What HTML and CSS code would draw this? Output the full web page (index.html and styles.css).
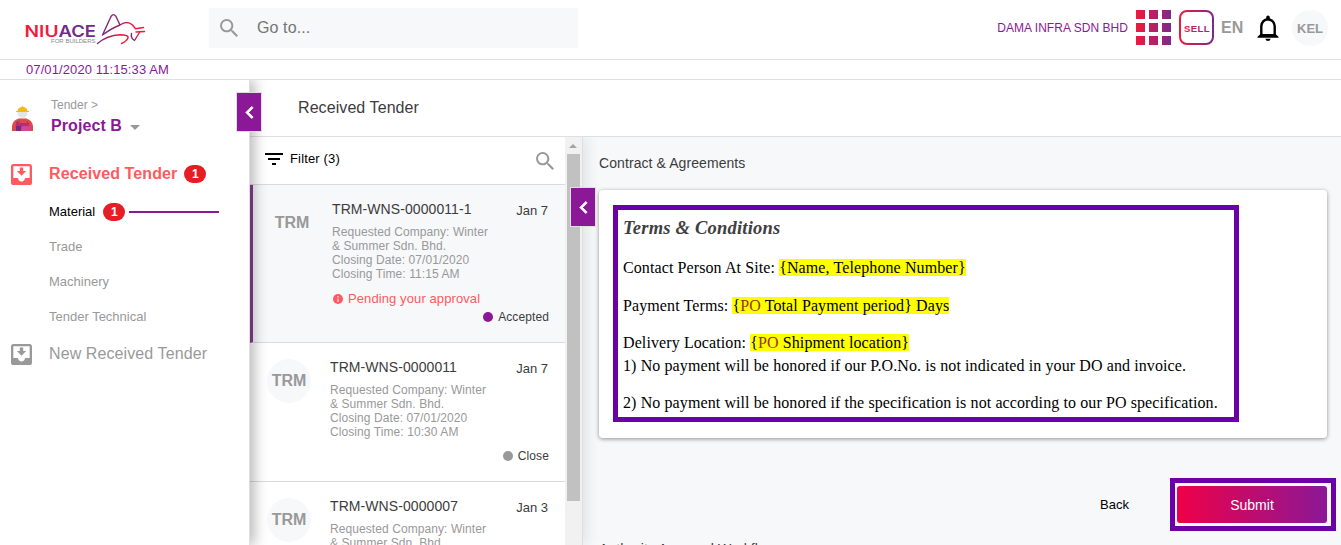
FILE: index.html
```html
<!DOCTYPE html>
<html lang="en">
<head>
<meta charset="utf-8">
<title>Received Tender</title>
<link rel="stylesheet" href="styles.css">
</head>
<body>
<svg class="defs" width="0" height="0" aria-hidden="true">
  <defs>
    <linearGradient id="brand" x1="0" x2="1" y1="0" y2="0"><stop offset="0" stop-color="#f5163c"/><stop offset="1" stop-color="#7b2a8b"/></linearGradient>
    <linearGradient id="brandGrid" gradientUnits="userSpaceOnUse" x1="0" x2="35" y1="0" y2="0"><stop offset="0" stop-color="#f5163c"/><stop offset="1" stop-color="#7b2a8b"/></linearGradient>
    <linearGradient id="tail" gradientUnits="userSpaceOnUse" x1="97" x2="129" y1="0" y2="0"><stop offset="0" stop-color="#6f2b8a"/><stop offset=".8" stop-color="#f5163c"/></linearGradient>
    <linearGradient id="back" gradientUnits="userSpaceOnUse" x1="101" x2="140" y1="0" y2="0"><stop offset="0" stop-color="#6f2b8a"/><stop offset=".5" stop-color="#a02468"/><stop offset=".8" stop-color="#f5163c"/></linearGradient>
    <linearGradient id="face" gradientUnits="userSpaceOnUse" x1="131" x2="140" y1="0" y2="0"><stop offset="0" stop-color="#6f2b8a"/><stop offset="1" stop-color="#f5163c"/></linearGradient>
    <symbol id="search" viewBox="3 3 17.5 17.5"><path d="M15.5 14h-.79l-.28-.27A6.47 6.47 0 0 0 16 9.500 6.500 6.500 0 1 0 9.500 16c1.610 0 3.090-.59 4.230-1.570l.27.28v.79l5 4.990L20.490 19l-4.990-5zm-6 0C7.010 14 5 11.990 5 9.500S7.010 5 9.500 5 14 7.010 14 9.500 11.990 14 9.500 14z"/></symbol>
    <symbol id="inbox" viewBox="3 3 18 18"><path d="M16 9h-2.550V6h-2.900v3H8l4 4zm3-6H4.990C3.880 3 3 3.900 3 5v14c0 1.100.88 2 1.990 2H19c1.100 0 2-.9 2-2V5c0-1.100-.9-2-2-2zm0 12h-4c0 1.660-1.350 3-3 3s-3-1.340-3-3H4.990V5H19v10z"/></symbol>
    <symbol id="chevron" viewBox="7.500 5.500 8.500 13"><path d="M15.410 7.410 14 6l-6 6 6 6 1.410-1.410L10.830 12z" stroke="#fff" stroke-width=".8"/></symbol>
  </defs>
</svg>

<header class="topbar">
  <svg class="logo" width="128" height="40" viewBox="22 8 128 40">
    <text class="logo-name" x="24.500" y="36.800" textLength="34" lengthAdjust="spacingAndGlyphs" fill="#ee1c3f">NIU</text>
    <text class="logo-name" x="58.500" y="36.800" textLength="37.500" lengthAdjust="spacingAndGlyphs" fill="#742a88">ACE</text>
    <text class="logo-tag" x="51" y="43" textLength="44.500" lengthAdjust="spacingAndGlyphs">FOR BUILDERS</text>
    <g fill="none" stroke-width="1.400" stroke-linejoin="round" stroke-linecap="round">
      <path stroke="url(#back)" d="M102.500 35 111 16.500Q113.500 12.800 116 16.500L120 25Q112 28 102.500 35M120 25Q127 20 132.500 25L135.500 28.800 143.500 27.500M136 32 144.500 31.500"/>
      <path stroke="url(#face)" d="M139.500 32.500 137 36.500 134.500 40.500Q130.500 38 131.500 33.500"/>
      <path stroke="url(#tail)" d="M97.500 43.500Q107 35.500 120 34.800 129 35 128 38 127 41 121.500 43.500"/>
    </g>
  </svg>
  <div class="search"><svg width="18" height="18" fill="#999"><use href="#search"/></svg><span>Go to...</span></div>
  <div class="tools">
    <span class="company">DAMA INFRA SDN BHD</span>
    <svg class="grid" width="35" height="35" fill="url(#brandGrid)"><path d="M0 0h9v9H0zM13 0h9v9h-9zM26 0h9v9h-9zM0 13h9v9H0zM13 13h9v9h-9zM26 13h9v9h-9zM0 26h9v9H0zM13 26h9v9h-9zM26 26h9v9h-9z"/></svg>
    <svg class="sell" width="35" height="35"><rect x="1" y="1" width="33" height="33" rx="7" fill="#fff" stroke="url(#brand)" stroke-width="2"/><text x="5" y="22" textLength="25.500" lengthAdjust="spacing" fill="url(#brandGrid)">SELL</text></svg>
    <span class="lang">EN</span>
    <svg class="bell" width="22" height="26" viewBox="0 0 22 26"><path d="M4.300 20.500V11.200Q4.800 5 11 4.200 17.200 5 17.700 11.200V20.500" fill="none" stroke="#000" stroke-width="2.400"/><path d="M9.200 4V2.200a1.800 1.800 0 0 1 3.600 0V4zM3.500 19h15l3 2.700v1H.5v-1zM8.300 23.800h5.400q-.6 2.200-2.700 2.200t-2.700-2.200z"/></svg>
    <span class="avatar">KEL</span>
  </div>
</header>
<div class="clock">07/01/2020 11:15:33 AM</div>

<div class="shell">
  <aside class="sidebar">
    <div class="project">
      <svg width="22" height="27" viewBox="0 0 22 27">
        <circle cx="10.500" cy="7" r="5" fill="#e5e5e8"/>
        <path d="M5.500 5Q6 1.500 9.500 1L10.500 0l1 1Q15 1.500 15.500 5H17v1H4V5z" fill="#f5b916"/>
        <path d="M0 25V20Q1 13 8 12.500h5Q20 13 21 20v5z" fill="#dc4949"/>
        <path d="M4 25v-8l4-4v12z" fill="#762b8b"/><path d="M4 17h13v4H4zM13 13l4 4v4h-4z" fill="#b62e6b"/><path d="M10 20h8v5h-8z" fill="#d34499"/><path d="M4 20h5v5H4z" fill="#742a8b"/>
        <path d="M7 12v5M14 12v5" stroke="#e76755"/>
      </svg>
      <div><div class="crumb">Tender &gt;</div><div class="project-name">Project B <i></i></div></div>
    </div>
    <div class="nav-head active"><svg width="21" height="21"><use href="#inbox"/></svg><span>Received Tender</span><b class="badge">1</b></div>
    <div class="nav-item current"><span>Material</span><b class="badge">1</b><i></i></div>
    <div class="nav-item">Trade</div>
    <div class="nav-item">Machinery</div>
    <div class="nav-item">Tender Technical</div>
    <div class="nav-head"><svg width="21" height="21"><use href="#inbox"/></svg><span>New Received Tender</span></div>
    <button class="toggle toggle-nav"><svg width="9" height="13"><use href="#chevron"/></svg></button>
  </aside>

  <main class="main">
    <h1 class="title">Received Tender</h1>
    <div class="columns">
      <section class="list-pane">
        <div class="list">
          <div class="filter">
            <svg width="18" height="12"><path d="M0 0h18v2H0zM3 5h12v2H3zM7 10h4v2H7z"/></svg>
            <span>Filter (3)</span>
            <svg class="find" width="18" height="18" fill="#999"><use href="#search"/></svg>
          </div>
          <article class="tender selected">
            <span class="mono">TRM</span>
            <div class="info"><div class="row"><h2>TRM-WNS-0000011-1</h2><time>Jan 7</time></div>
              <p>Requested Company: Winter<br>&amp; Summer Sdn. Bhd.<br>Closing Date: 07/01/2020<br>Closing Time: 11:15 AM</p>
              <div class="pending"><svg width="10" height="10" viewBox="0 0 10 10"><circle cx="5" cy="5" r="5" fill="#ff5a5f"/><path d="M4.300 2h1.400v1.500H4.300zM4.300 4.500h1.400V8H4.300z" fill="#fff" opacity=".75"/></svg>Pending your approval</div>
              <div class="status"><i></i>Accepted</div></div>
          </article>
          <article class="tender">
            <span class="mono">TRM</span>
            <div class="info"><div class="row"><h2>TRM-WNS-0000011</h2><time>Jan 7</time></div>
              <p>Requested Company: Winter<br>&amp; Summer Sdn. Bhd.<br>Closing Date: 07/01/2020<br>Closing Time: 10:30 AM</p>
              <div class="status closed"><i></i>Close</div></div>
          </article>
          <article class="tender">
            <span class="mono">TRM</span>
            <div class="info"><div class="row"><h2>TRM-WNS-0000007</h2><time>Jan 3</time></div>
              <p>Requested Company: Winter<br>&amp; Summer Sdn. Bhd.</p></div>
          </article>
        </div>
        <div class="scrollbar"><i class="up"></i><i class="thumb"></i></div>
        <button class="toggle toggle-list"><svg width="9" height="13"><use href="#chevron"/></svg></button>
      </section>

      <section class="content">
        <h3>Contract &amp; Agreements</h3>
        <div class="card">
          <div class="terms">
            <h4>Terms &amp; Conditions</h4>
            <p>Contact Person At Site: <mark>{Name, Telephone Number}</mark></p>
            <p>Payment Terms: <mark>{<em>PO</em> Total Payment period} Days</mark></p>
            <p>Delivery Location: <mark>{<em>PO</em> Shipment location}</mark><br>1) No payment will be honored if our P.O.No. is not indicated in your DO and invoice.</p>
            <p>2) No payment will be honored if the specification is not according to our PO specification.</p>
          </div>
        </div>
        <div class="actions"><button class="back">Back</button><div class="submit-frame"><button class="submit">Submit</button></div></div>
        <h3 class="next">Authority Approval Workflow</h3>
      </section>
    </div>
  </main>
</div>
</body>
</html>
```
FILE: styles.css
```css
* { box-sizing: border-box; }
body { margin: 0; height: 545px; overflow: hidden; background: #fff; color: #3c3c3c; font-family: "Liberation Sans", Arial, sans-serif; }
h1, h2, h3, h4, p { margin: 0; font-weight: normal; }
button { border: 0; padding: 0; background: none; font-family: inherit; }
svg { display: block; flex: none; }
.defs { position: absolute; }

/* Top bar */
.topbar { display: flex; height: 60px; border-bottom: 1px solid #dfdfe2; padding: 8px 13px 0 22px; }
.logo-name { font: 600 15.500px Inter, sans-serif; }
.logo-tag { font: 5.800px "Liberation Sans", sans-serif; fill: #888; }
.search { display: flex; align-items: center; gap: 19px; width: 369px; height: 40px; margin-left: 59px; padding-left: 11px; background: #f6f8fa; color: #757575; font-size: 16px; letter-spacing: .1px; }
.tools { display: flex; align-items: center; height: 40px; margin-left: auto; }
.company { color: #8b1896; font-size: 12px; letter-spacing: .04px; }
.grid { margin: -1px 8px 0 8px; }
.sell { margin-top: -1px; }
.sell text { font: bold 9.500px "Liberation Sans", sans-serif; }
.lang { width: 23px; margin: 0 13px 0 7px; color: #999; font-size: 16px; font-weight: bold; }
.avatar { display: flex; align-items: center; justify-content: center; width: 36px; height: 36px; margin-left: 13px; border-radius: 50%; background: #f6f8fa; color: #999; font-size: 13px; font-weight: bold; }
.clock { height: 20px; padding-left: 26px; border-bottom: 1px solid #dfdfe2; color: #8b1896; font-size: 13px; line-height: 19px; letter-spacing: .1px; }

.shell { display: flex; height: 465px; }

/* Sidebar */
.sidebar { position: relative; z-index: 2; flex: none; width: 250px; height: 465px; border-right: 1px solid #dfdfe2; background: #fff; box-shadow: 5px 0 12px rgba(0, 0, 0, .26); clip-path: inset(0 -20px 0 0); color: #999; }
.project { display: flex; gap: 18px; height: 76px; padding: 16px 0 0 12px; }
.project svg { margin-top: 10px; margin-right: -1px; }
.crumb { height: 18px; font-size: 12px; line-height: 18px; }
.project-name { display: flex; align-items: center; gap: 8px; color: #8b1896; font-size: 16px; font-weight: bold; line-height: 23px; letter-spacing: .08px; }
.project-name i { border: 5px solid transparent; border-top-color: #999; border-bottom: 0; margin-top: 3px; }
.nav-head { display: flex; align-items: center; height: 36px; padding-left: 11px; font-size: 16px; letter-spacing: .1px; }
.nav-head svg { margin-right: 17px; fill: #999; }
.active { color: #ff5a5f; font-weight: bold; letter-spacing: .1px; }
.active svg { fill: #ff5a5f; }
.badge { width: 22px; height: 18px; margin-left: 8px; border-radius: 9px; background: #e61d25; color: #fff; font-size: 12px; font-weight: bold; line-height: 18px; text-align: center; }
.active .badge { margin-left: 7px; }
.nav-item { display: flex; align-items: center; height: 35px; padding-left: 49px; font-size: 13px; }
.current { height: 39px; color: #000; }
.current + .nav-item { margin-top: -2px; }
.current i { width: 90px; height: 2px; margin-left: 4px; background: #8b1896; }
.nav-item + .nav-head { margin-top: 2px; }
.nav-item .badge { flex: none; }
.toggle { position: absolute; z-index: 3; display: flex; align-items: center; justify-content: center; width: 26px; height: 40px; border: 1px solid #dfdfe2; background: #8b1896; }
.toggle svg { fill: #fff; }
.toggle-nav { top: 12px; left: 236px; }
.toggle-list { top: 50px; left: 320px; }

/* Main area */
.main { flex: 1; min-width: 0; }
.title { height: 57px; padding-left: 48px; border-bottom: 1px solid #dfdfe2; font-size: 16px; line-height: 55px; letter-spacing: .08px; }
.columns { display: flex; height: 408px; }
.list-pane { position: relative; z-index: 1; display: flex; flex: none; width: 333px; border-right: 1px solid #dfdfe2; box-shadow: 5px 0 12px rgba(0, 0, 0, .08); clip-path: inset(0 -20px 0 0); }
.list { width: 315px; overflow: hidden; }
.filter { display: flex; align-items: center; gap: 7px; height: 48px; padding: 0 11px 4px 15px; border-bottom: 1px solid #d9dbe0; color: #000; font-size: 13px; letter-spacing: .15px; }
.find { margin: 5px 0 0 auto; }
.tender { display: flex; height: 139px; padding: 16px 17px 0 17px; border-bottom: 1px solid #d9dbe0; background: #fff; }
.selected { height: 158px; padding-left: 17px; border-left: 3px solid #8e3d93; background: #f6f8fa; }
.mono { display: flex; align-items: center; justify-content: center; flex: none; width: 44px; height: 44px; border-radius: 50%; background: #f6f8fa; color: #999; font-size: 16px; font-weight: bold; }
.info { flex: 1; margin-left: 19px; }
.selected .info { margin-left: 18px; }
.row { display: flex; justify-content: space-between; height: 24px; }
h2 { font-size: 14px; line-height: 17px; letter-spacing: .08px; }
time { font-size: 13px; line-height: 20px; }
.tender p { color: #999; font-size: 12px; line-height: 14px; letter-spacing: .08px; white-space: nowrap; }
.pending { display: flex; align-items: center; gap: 5px; height: 15px; margin: 10px 0 0 1px; color: #ff5a5f; font-size: 13px; letter-spacing: .1px; }
.status { display: flex; align-items: center; justify-content: flex-end; gap: 5px; height: 14px; margin: 4px -1px 0 0; font-size: 12px; letter-spacing: .1px; }
.status i { width: 10px; height: 10px; border-radius: 50%; background: #8b1896; }
.closed { margin-top: 10px; }
.closed i { background: #999; }
.scrollbar { width: 17px; background: #f1f1f1; }
.scrollbar i { display: block; }
.up { width: 0; margin: 7px 0 6px 4px; border: 4px solid transparent; border-bottom-color: #a3a3a3; border-top: 0; }
.thumb { width: 13px; height: 347px; margin-left: 2px; background: #c1c1c1; }

/* Agreement */
.content { flex: 1; min-width: 0; padding: 18px 14px 0 16px; background: #f6f8fa; }
h3 { height: 35px; font-size: 14px; line-height: 17px; letter-spacing: .08px; }
.card { height: 248px; padding: 15px 14px; border-radius: 4px; background: #fff; box-shadow: 0 1px 4px rgba(0, 0, 0, .42); }
.terms { width: 626px; height: 217px; padding: 7px 5px; border: 5px solid #6a00a5; color: #000; font: 16px/23px "Liberation Serif", serif; letter-spacing: .1px; white-space: nowrap; }
h4 { margin-bottom: 16px; color: #404040; font-size: 18.500px; font-style: italic; font-weight: bold; line-height: 23px; letter-spacing: .22px; }
.terms p { margin-bottom: 14px; }
.terms p:nth-of-type(1) { margin-bottom: 15px; }
mark { background: #ff0; color: #000; }
mark em { color: #993300; font-style: normal; }
.actions { display: flex; justify-content: flex-end; align-items: center; margin: 40px -9px 0 0; }
.back { margin-right: 41px; color: #000; font-size: 13px; }
.submit-frame { width: 166px; height: 53px; padding: 3px 4px 3px 2px; border: 5px solid #6a00a5; }
.submit { width: 150px; height: 37px; border-radius: 3px; background: linear-gradient(90deg, #ef0048, #8b1896); color: #fff; font-size: 14px; }
.next { margin-top: 10px; }
```
